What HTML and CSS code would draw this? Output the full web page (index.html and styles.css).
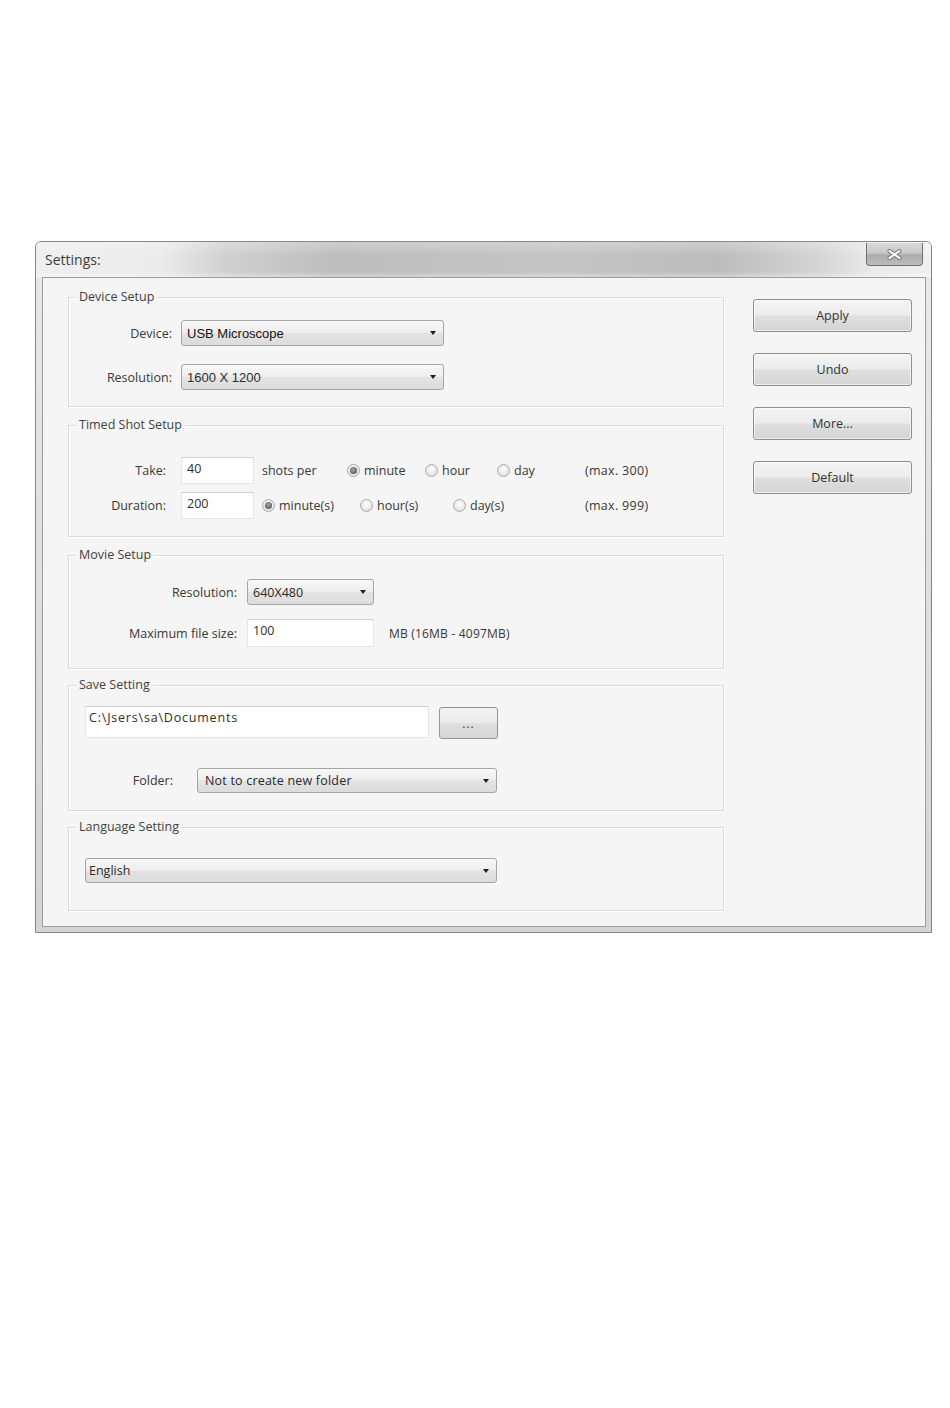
FILE: index.html
```html
<!DOCTYPE html>
<html lang="en">
<head>
<meta charset="utf-8">
<title>Settings</title>
<link rel="stylesheet" href="styles.css">
</head>
<body>
<div class="window">
  <div class="titlebar">
    <span class="title">Settings:</span>
    <div class="close">
      <svg width="15" height="11" viewBox="0 0 15 11" aria-hidden="true">
        <path d="M2.5 2 L12.5 9 M12.5 2 L2.5 9" stroke="#707070" stroke-width="4" stroke-linecap="round" fill="none"/>
        <path d="M2.5 2 L12.5 9 M12.5 2 L2.5 9" stroke="#f6f6f6" stroke-width="2.2" stroke-linecap="round" fill="none"/>
      </svg>
    </div>
  </div>
  <div class="frame">
    <div class="client">
      <div class="groups">
        <div class="group g1">
          <span class="group-title">Device Setup</span>
          <div class="row r1">
            <span class="lbl">Device:</span>
            <div class="combo dev"><span class="val">USB Microscope</span><span class="arrow"></span></div>
          </div>
          <div class="row r2">
            <span class="lbl">Resolution:</span>
            <div class="combo dev light"><span class="val">1600 X 1200</span><span class="arrow"></span></div>
          </div>
        </div>

        <div class="group g2">
          <span class="group-title">Timed Shot Setup</span>
          <div class="row r1">
            <span class="lbl">Take:</span>
            <div class="field short">40</div>
            <span class="shots">shots per</span>
            <span class="opt w-min"><span class="radio on"></span>minute</span>
            <span class="opt w-hour"><span class="radio"></span>hour</span>
            <span class="opt w-day"><span class="radio"></span>day</span>
            <span class="max">(max. 300)</span>
          </div>
          <div class="row r2">
            <span class="lbl">Duration:</span>
            <div class="field short">200</div>
            <span class="opt w-mins"><span class="radio on"></span>minute(s)</span>
            <span class="opt w-hours"><span class="radio"></span>hour(s)</span>
            <span class="opt w-days"><span class="radio"></span>day(s)</span>
            <span class="max">(max. 999)</span>
          </div>
        </div>

        <div class="group g3">
          <span class="group-title">Movie Setup</span>
          <div class="row r1">
            <span class="lbl">Resolution:</span>
            <div class="combo mov"><span class="val">640X480</span><span class="arrow"></span></div>
          </div>
          <div class="row r2">
            <span class="lbl">Maximum file size:</span>
            <div class="field mid">100</div>
            <span class="unit">MB (16MB - 4097MB)</span>
          </div>
        </div>

        <div class="group g4">
          <span class="group-title">Save Setting</span>
          <div class="row r1">
            <div class="field path">C:\Jsers\sa\Documents</div>
            <div class="browse">...</div>
          </div>
          <div class="row r2">
            <span class="lbl">Folder:</span>
            <div class="combo folder"><span class="val">Not to create new folder</span><span class="arrow"></span></div>
          </div>
        </div>

        <div class="group g5">
          <span class="group-title">Language Setting</span>
          <div class="row r1">
            <div class="combo lang"><span class="val">English</span><span class="arrow"></span></div>
          </div>
        </div>
      </div>

      <div class="actions">
        <div class="btn">Apply</div>
        <div class="btn">Undo</div>
        <div class="btn">More...</div>
        <div class="btn">Default</div>
      </div>
    </div>
  </div>
</div>
</body>
</html>
```

FILE: styles.css
```css
* { box-sizing: border-box; }

html, body {
  margin: 0;
  padding: 0;
  background: #ffffff;
}

body {
  font-family: "Open Sans", "Liberation Sans", sans-serif;
  font-size: 12.5px;
  color: #383838;
}

.window {
  width: 897px;
  height: 692px;
  margin: 241px 0 0 35px;
  border: 1px solid #868686;
  border-radius: 6px 6px 0 0;
  background: #dedede;
  display: flex;
  flex-direction: column;
  overflow: hidden;
}

.titlebar {
  height: 35px;
  flex: none;
  display: flex;
  align-items: flex-start;
  padding-left: 9px;
  background:
    linear-gradient(to bottom, rgba(255,255,255,0.25), rgba(255,255,255,0) 40%, rgba(255,255,255,0) 85%, rgba(255,255,255,0.35)),
    linear-gradient(to right, #efefef 0, #ebebeb 125px, #d0d0d0 190px, #bdbdbd 300px, #c4c4c4 520px, #bcbcbc 680px, #d4d4d4 780px, #ebebeb 840px, #f0f0f0 100%);
}

.title {
  line-height: 35px;
  font-size: 14px;
  color: #3d3d3d;
}

.close {
  margin: 1px 8px 0 auto;
  width: 57px;
  height: 23px;
  border: 1px solid #707070;
  border-top: none;
  border-radius: 0 0 4px 4px;
  background: linear-gradient(#dadada, #c8c8c8 45%, #acacac 55%, #bcbcbc);
  display: flex;
  align-items: center;
  justify-content: center;
}

.frame {
  flex: 1;
  display: flex;
  padding: 0 5px 5px 6px;
  background: linear-gradient(to bottom, #e8e8e8, #d4d4d4);
}

.client {
  flex: 1;
  display: flex;
  border: 1px solid #9c9c9c;
  background: #f4f5f4;
}

.groups {
  width: 681px;
  flex: none;
  padding: 19px 0 0 25px;
}

.group {
  width: 656px;
  border: 1px solid #dadcda;
  box-shadow: inset 1px 1px 0 #ffffff, 1px 1px 0 #ffffff;
}

.group-title {
  display: block;
  width: max-content;
  height: 16px;
  line-height: 16px;
  margin: -9px 0 0 7px;
  padding: 0 3px;
  background: #f4f5f4;
  color: #424242;
}

.g1 { height: 110px; }
.g2 { height: 112px; margin-top: 18px; }
.g3 { height: 114px; margin-top: 18px; }
.g4 { height: 126px; margin-top: 16px; }
.g5 { height: 84px; margin-top: 16px; }

.row {
  display: flex;
  align-items: center;
}

.lbl {
  flex: none;
  text-align: right;
  white-space: nowrap;
}

/* Device setup */
.g1 .lbl { width: 103px; margin-right: 9px; }
.g1 .r1 { margin-top: 15px; }
.g1 .r2 { margin-top: 18px; }

/* Timed shot */
.g2 .lbl { width: 97px; margin-right: 15px; }
.g2 .r1 { margin-top: 24px; }
.g2 .r2 { margin-top: 8px; }

/* Movie */
.g3 .lbl { width: 168px; margin-right: 10px; }
.g3 .r1 { margin-top: 16px; }
.g3 .r2 { margin-top: 14px; }

/* Save */
.g4 .r1 { margin-top: 13px; margin-left: 16px; align-items: flex-start; }
.g4 .r2 { margin-top: 29px; }
.g4 .lbl { width: 104px; margin-right: 24px; }

/* Language */
.g5 .r1 { margin-top: 23px; margin-left: 16px; }

.combo {
  flex: none;
  height: 26px;
  display: flex;
  align-items: center;
  padding: 0 7px 0 5px;
  border: 1px solid #a5a5a5;
  border-radius: 3px;
  background: linear-gradient(#f8f8f8, #eeeeee 48%, #e3e3e3 52%, #dcdcdc);
  color: #2a2a2a;
  white-space: nowrap;
}

.combo .val { flex: 1; }

.combo .arrow {
  flex: none;
  width: 0;
  height: 0;
  border-left: 3.5px solid transparent;
  border-right: 3.5px solid transparent;
  border-top: 4px solid #1e1e1e;
}

.combo.dev {
  width: 263px;
  font-family: "Liberation Sans", Arial, sans-serif;
  font-size: 13px;
  color: #161616;
}

.combo.dev.light { color: #2c2c2c; }

.combo.mov { width: 127px; }
.combo.folder { width: 300px; height: 25px; padding-left: 7px; letter-spacing: 0.2px; }
.combo.lang { width: 412px; height: 25px; padding-left: 3px; }

.field {
  flex: none;
  height: 27px;
  padding: 3px 5px 0;
  line-height: 16px;
  background: #ffffff;
  border: 1px solid #e6e6e6;
  border-top-color: #d0d0d0;
  color: #2e2e2e;
  white-space: nowrap;
}

.field.short { width: 73px; }
.field.mid { width: 127px; height: 28px; }
.field.path { width: 344px; height: 32px; padding-left: 3px; letter-spacing: 0.8px; }

.shots { flex: none; width: 85px; margin-left: 8px; }

.opt {
  flex: none;
  display: flex;
  align-items: center;
  white-space: nowrap;
}

.w-min { width: 78px; }
.w-hour { width: 72px; }
.w-day { width: 88px; }
.g2 .r2 .w-mins { margin-left: 8px; }
.w-mins { width: 98px; }
.w-hours { width: 93px; }
.w-days { width: 132px; }

.radio {
  flex: none;
  width: 13px;
  height: 13px;
  margin-right: 4px;
  border-radius: 50%;
  border: 1px solid #ababab;
  background: radial-gradient(circle at 50% 40%, #fefefe 0, #eeeeee 45%, #d6d6d6 100%);
  display: flex;
  align-items: center;
  justify-content: center;
}

.radio.on::after {
  content: "";
  width: 7px;
  height: 7px;
  border-radius: 50%;
  background: radial-gradient(circle at 45% 40%, #a8a8a8 0, #6a6a6a 60%, #4e4e4e 100%);
}

.max { flex: none; letter-spacing: 0.3px; }

.unit { flex: none; margin-left: 15px; font-size: 12px; letter-spacing: 0.2px; }

.browse {
  flex: none;
  width: 59px;
  height: 32px;
  margin: 1px 0 0 10px;
  border: 1px solid #959595;
  border-radius: 3px;
  background: linear-gradient(#f3f3f3, #ebebeb 48%, #dfdfdf 52%, #d5d5d5);
  display: flex;
  align-items: center;
  justify-content: center;
  font-size: 12px;
  letter-spacing: 1px;
  color: #444;
}

.actions {
  flex: none;
  width: 159px;
  margin-left: 29px;
  padding-top: 21px;
  display: flex;
  flex-direction: column;
  gap: 21px;
}

.btn {
  height: 33px;
  display: flex;
  align-items: center;
  justify-content: center;
  border: 1px solid #8e8e8e;
  border-radius: 3px;
  background: linear-gradient(#f4f4f4, #ececec 48%, #dfdfdf 52%, #d4d4d4);
  box-shadow: inset 0 0 0 1px rgba(255,255,255,0.6);
  color: #333333;
}
```
